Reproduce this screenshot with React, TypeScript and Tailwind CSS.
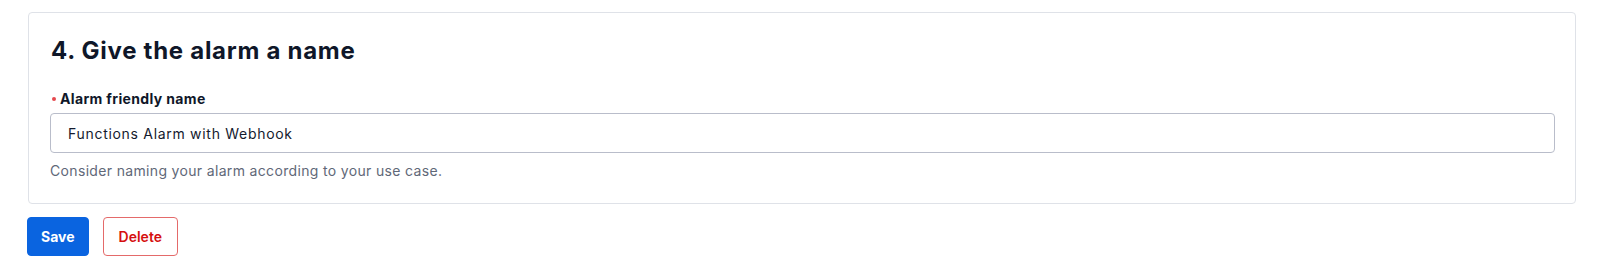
export default function App() {
  return (
    <div className="min-h-[271px] bg-white pl-[27px] pr-[24px] pt-[12px] font-['Inter',sans-serif]">
      {/* Step card */}
      <div className="ml-px rounded-[4px] border border-[#dfe2e8] pb-[22px] pl-[21px] pr-[20px] pt-[22px]">
        <h2 className="ml-[1px] text-[24px] font-bold leading-8 tracking-[0.03em] text-[#0f1729]">4. Give the alarm a name</h2>

        <div className="mt-[22px] flex items-center gap-[4px] pl-[2px]">
          <span className="h-[4px] w-[4px] rounded-full bg-[#e5484d]" />
          <label className="text-[14px] font-bold leading-5 tracking-[0.025em] text-[#0f1729]">Alarm friendly name</label>
        </div>

        <input
          type="text"
          defaultValue="Functions Alarm with Webhook"
          className="mt-[4px] h-[40px] w-full rounded-[4px] border border-[#b9bdca] px-[17px] text-[14px] tracking-[0.05em] text-[#141a2e] outline-none"
        />

        <p className="mt-[8px] text-[14px] leading-5 tracking-[0.024em] text-[#5f6878]">Consider naming your alarm according to your use case.</p>
      </div>

      {/* Actions */}
      <div className="mt-[13px] flex gap-[14px]">
        <button className="h-[39px] rounded-[4px] border border-[#0a64e0] bg-[#0a64e0] px-[13px] text-[14px] font-bold text-white">
          Save
        </button>
        <button className="h-[39px] rounded-[4px] border border-[#e46a6a] bg-white px-[15px] text-[14px] font-semibold text-[#d50f0f]">
          Delete
        </button>
      </div>
    </div>
  )
}
